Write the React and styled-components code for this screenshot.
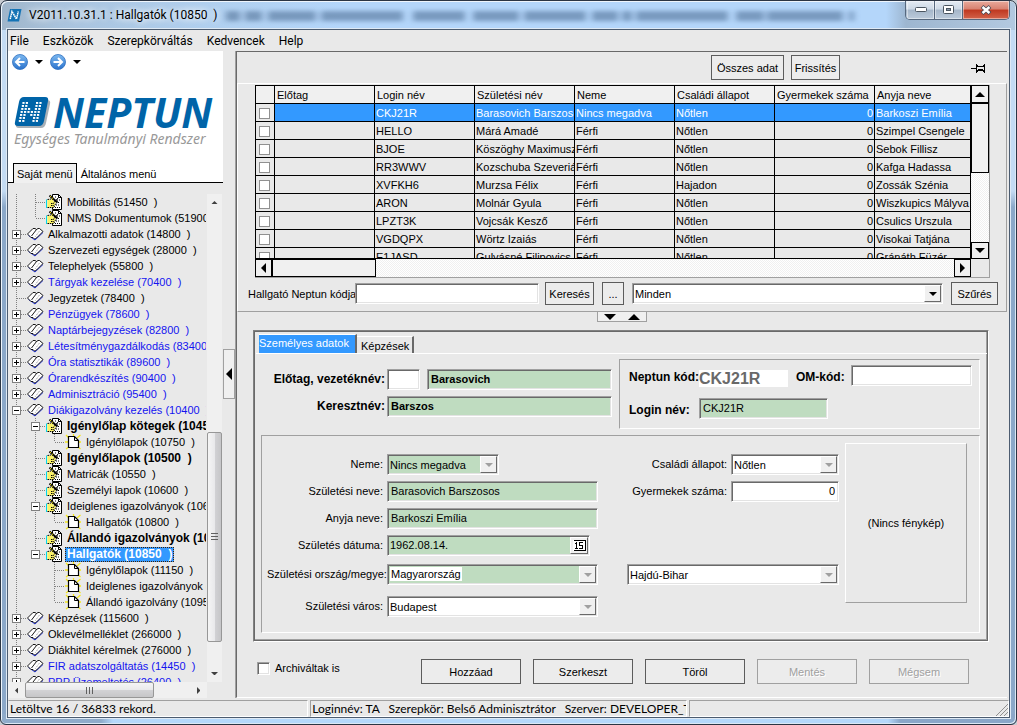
import React, { useState } from 'react';
import styled, { createGlobalStyle, css } from 'styled-components';

const GlobalStyle = createGlobalStyle`
  * { box-sizing: border-box; }
  body {
    margin: 0;
    background: #c8ccd2;
    color: #000;
    font: 11px/14px "Liberation Sans", Arial, sans-serif;
  }
  button, input, select, output { font: inherit; color: inherit; }
`;

const sunken = css`
  border: 1px solid;
  border-color: #a0a0a0 #fff #fff #a0a0a0;
  box-shadow: inset 1px 1px 0 #696969, inset -1px -1px 0 #e3e3e3;
`;

const etched = css`
  border: 1px solid;
  border-color: #a0a0a0 #fff #fff #a0a0a0;
`;

/* window */

const Window = styled.div`
  display: flex;
  flex-direction: column;
  height: 100vh;
  padding: 0 6px 6px;
  border: 1px solid #2b3544;
  border-radius: 7px 7px 6px 6px;
  background:
    linear-gradient(90deg, #8fabca 100px, #b5d8fb 112px, #b5d8fb calc(100% - 128px), #8aa6c8 calc(100% - 116px)) bottom / 100% 10px no-repeat,
    linear-gradient(90deg, #9fb5ca 0, #a9c3dd 60px, #b0cfee 200px, #b4d6fa 340px, #b4d6fa calc(100% - 130px), #9db6d0 calc(100% - 110px), #b3c9e0) top / 100% 29px no-repeat,
    linear-gradient(#c4dbf3 190px, #8ba8c9 206px);
  box-shadow: inset 1px 1px 0 #eef5fc, inset -1px -1px 0 #dbe8f5;
`;

const TitleBar = styled.header`
  position: relative;
  display: flex;
  flex: none;
  height: 28px;
  align-items: center;
`;

const Title = styled.h1`
  margin: 0 0 0 7px;
  font: 12px/16px Roboto, sans-serif;
  white-space: pre;
  text-shadow: 0 0 6px #fff, 0 0 8px #fff;
`;

const GlassBlur = styled.svg`
  flex: 1;
  min-width: 0;
  height: 28px;
`;

const Caption = styled.div`
  display: flex;
  align-self: flex-start;
  border: 1px solid #56687e;
  border-top: 0;
  border-radius: 0 0 5px 5px;
  overflow: hidden;
`;

const CaptionButton = styled.button`
  display: flex;
  justify-content: center;
  align-items: center;
  width: ${p => (p.$close ? 47 : 28)}px;
  height: 18px;
  padding: 0;
  border: 0;
  border-left: 1px solid ${p => (p.$first ? 'transparent' : '#56687e')};
  background: ${p => (p.$close
    ? 'linear-gradient(#e9aa9c 0, #d88170 45%, #bf3820 50%, #d3634a 100%)'
    : 'linear-gradient(#e4ebf3 0, #cdd9e6 45%, #a5b6c9 50%, #bccbdb 100%)')};
  box-shadow: inset 0 0 0 1px rgba(255, 255, 255, 0.45);
`;

const Client = styled.div`
  display: flex;
  flex-direction: column;
  flex: 1;
  min-height: 0;
  border: 1px solid #4c5c70;
  background: #e9e9e9;
  box-shadow: 0 0 0 1px #dfeaf5;
`;

const MenuBar = styled.nav`
  display: flex;
  flex: none;
  height: 21px;
  padding-left: 2px;
  gap: 14px;
`;

const MenuItem = styled.button`
  padding: 0;
  border: 0;
  background: none;
  font: 12px/20px Roboto, sans-serif;
`;

const Body = styled.div`
  display: flex;
  flex: 1;
  min-height: 0;
`;

/* left side */

const Sidebar = styled.aside`
  display: flex;
  flex-direction: column;
  flex: none;
  width: 215px;
`;

const Brand = styled.div`
  flex: none;
  height: 112px;
  background: #fff;
`;

const History = styled.div`
  display: flex;
  align-items: center;
  gap: 7px;
  height: 22px;
  padding-left: 4px;
`;

const IconButton = styled.button`
  display: flex;
  padding: 0;
  border: 0;
  background: none;
`;

const Logo = styled.div`
  display: flex;
  align-items: center;
  height: 30px;
  margin-top: 24px;
  padding-left: 6px;
  gap: 2px;
`;

const LogoName = styled.span`
  color: #0064a8;
  font: italic bold 41px/30px "Open Sans", sans-serif;
`;

const Tagline = styled.p`
  margin: 3px 0 0 6px;
  color: #999;
  font: italic 14px/18px "Noto Sans", sans-serif;
  white-space: nowrap;
`;

const MenuTabs = styled.div`
  display: flex;
  flex: none;
  height: 20px;
  padding-left: 5px;
  background: linear-gradient(#000, #000) bottom / 100% 1px no-repeat #fff;
`;

const MenuTab = styled.button`
  padding: 0 3px;
  border: 1px solid #000;
  border-bottom: 0;
  background: #f0f0f0;
  white-space: nowrap;
  ${p => !p.$active && 'border-color: transparent; background: none;'}
`;

const TreeArea = styled.div`
  display: grid;
  flex: 1;
  min-height: 0;
  margin-top: 11px;
  grid-template-columns: 1fr 15px;
  grid-template-rows: minmax(0, 1fr) 16px;
  padding-right: 1px;
`;

const Tree = styled.ul`
  margin: 0 1px 0 0;
  padding: 0;
  list-style: none;
  overflow: hidden;
`;

const TreeRow = styled.li`
  display: flex;
  align-items: center;
  height: 16px;
  svg { flex: none; }
`;

const TreeLabel = styled.a`
  margin-left: 2px;
  padding: 0 2px;
  line-height: 15px;
  color: ${p => (p.$blue ? '#1414f0' : '#000')};
  font-size: ${p => (p.$bold ? 12 : 11)}px;
  font-weight: ${p => (p.$bold ? 'bold' : 'normal')};
  text-decoration: none;
  white-space: pre;
  ${p => p.$selected && css`
    background: #3399ff;
    color: #fff;
    outline: 1px dotted #402000;
    outline-offset: -1px;
  `}
`;

const Scroll = styled.div`
  display: flex;
  flex-direction: ${p => (p.$vertical ? 'column' : 'row')};
  align-items: stretch;
  background: #f0f0f0;
`;

const ScrollEnd = styled.span`
  display: flex;
  flex: 0 0 17px;
  justify-content: center;
  align-items: center;
`;

const ScrollSpace = styled.span`
  flex: ${p => p.$grow} 0 0;
`;

const ScrollThumb = styled.span`
  display: flex;
  flex: ${p => p.$grow} 0 0;
  justify-content: center;
  align-items: center;
  border: 1px solid #979797;
  border-radius: 2px;
  background: linear-gradient(${p => (p.$vertical ? '90deg' : '180deg')}, #f5f5f5, #e9e9eb 50%, #d2d2d5 52%, #c6c6c8);
`;

const Splitter = styled.div`
  flex: none;
  width: 13px;
  padding-top: 298px;
  background: linear-gradient(#a0a0a0, #a0a0a0) right / 1px 100% no-repeat;
`;

const SplitterButton = styled.button`
  display: flex;
  justify-content: center;
  align-items: center;
  width: 12px;
  height: 50px;
  padding: 0;
  border: 1px solid #a0a0a0;
  background: #f0f0f0;
`;

/* right side */

const Main = styled.main`
  display: flex;
  flex-direction: column;
  flex: 1;
  min-width: 0;
  margin-right: 2px;
  border-top: 1px solid #696969;
  border-left: 1px solid #696969;
  border-bottom: 1px solid #fff;
`;

const Toolbar = styled.div`
  display: flex;
  flex: none;
  justify-content: flex-end;
  align-items: flex-end;
  height: 31px;
  padding: 0 21px 3px 0;
  gap: 7px;
`;

const Button = styled.button`
  flex: none;
  width: ${p => p.$width}px;
  height: ${p => p.$height || 25}px;
  padding: 0;
  border: 1px solid #5c5c5c;
  background: #ececec;
  &:disabled {
    border-color: #a0a0a0;
    color: #a0a0a0;
    text-shadow: 1px 1px 0 #fff;
  }
`;

const PinButton = styled(IconButton)`
  margin: 0 0 6px 124px;
`;

const ListPanel = styled.section`
  padding: 1px 0 6px;
  border: 1px solid;
  border-color: #fff #a0a0a0 #a0a0a0 #fff;
`;

const GridFrame = styled.div`
  display: grid;
  grid-template-columns: minmax(0, 1fr) 18px;
  grid-template-rows: 174px 18px;
  margin: 0 16px 0 17px;
  border-right: 1px solid #a0a0a0;
  border-bottom: 1px solid #a0a0a0;
`;

const GridView = styled.div`
  overflow: hidden;
  border: 1px solid #000;
  border-right: 0;
`;

const Table = styled.table`
  width: 100%;
  table-layout: fixed;
  border-collapse: separate;
  border-spacing: 0;
`;

const HeadCell = styled.th`
  width: ${p => p.$width || 'auto'};
  height: 18px;
  padding: 0 0 0 2px;
  border: solid #000;
  border-width: 0 1px 1px 0;
  background: #f0f0f0;
  font-weight: normal;
  text-align: left;
  white-space: nowrap;
  overflow: hidden;
`;

const Cell = styled.td`
  height: 18px;
  padding: 0 1px;
  border: solid #000;
  border-width: 0 1px 1px 0;
  background: ${p => (p.$selected ? '#3399ff' : '#e9e9e9')};
  color: ${p => (p.$selected ? '#fff' : '#000')};
  text-align: ${p => p.$align || 'left'};
  white-space: nowrap;
  overflow: hidden;
`;

const RowCheck = styled.input`
  display: block;
  appearance: none;
  width: 11px;
  height: 11px;
  margin: 1px 0 0 2px;
  border: 1px solid #909090;
  background: #fff;
`;

const dither = 'repeating-conic-gradient(#fff 0 25%, #f0f0f0 0 50%) 0 0 / 2px 2px';

const FlatScroll = styled.div`
  display: flex;
  flex-direction: ${p => (p.$vertical ? 'column' : 'row')};
  background: ${dither};
`;

const FlatPart = styled.span`
  display: flex;
  flex: 0 0 ${p => p.$size}px;
  justify-content: center;
  align-items: center;
  border: 1px solid #000;
  background: #f0f0f0;
`;

const Grow = styled.span`
  flex: 1;
`;

const SearchRow = styled.form`
  display: flex;
  align-items: center;
  height: 23px;
  margin-top: 4px;
  padding: 0 8px 0 10px;
`;

const SearchLabel = styled.label`
  flex: none;
  width: 107px;
  white-space: nowrap;
`;

const SearchGroup = styled.div`
  display: flex;
  flex: 1;
  min-width: 0;
  align-items: center;
  padding-left: 6px;
  gap: 8px;
`;

const Input = styled.input`
  width: ${p => (p.$width ? `${p.$width}px` : '100%')};
  height: 21px;
  min-width: 0;
  padding: 0 3px 1px;
  ${sunken}
  border-radius: 0;
  background: ${p => (p.$required ? '#bfdcc0' : '#fff')};
  font-weight: ${p => (p.$bold ? 'bold' : 'normal')};
  text-align: ${p => p.$align || 'left'};
  outline: 0;
`;

const SelectBox = styled.span`
  position: relative;
  display: flex;
  flex: ${p => (p.$fill ? 1 : 'none')};
  width: ${p => (p.$width ? `${p.$width}px` : 'auto')};
  grid-column: ${p => p.$column || 'auto'};
  height: 21px;
  ${sunken}
  background: ${p => (p.$required ? '#bfdcc0' : '#fff')};
`;

const SelectField = styled.select`
  appearance: none;
  flex: 1;
  min-width: 0;
  padding: 0 18px 0 2px;
  border: 0;
  border-radius: 0;
  background: none;
  outline: 0;
`;

const SelectArrow = styled.span`
  position: absolute;
  top: 1px;
  right: 1px;
  bottom: 1px;
  display: flex;
  justify-content: center;
  align-items: center;
  width: 17px;
  border: 1px solid;
  border-color: #fff #696969 #696969 #fff;
  background: #f0f0f0;
  color: ${p => (p.$dim ? '#a0a0a0' : '#000')};
  pointer-events: none;
`;

const SelectedText = styled.span`
  position: absolute;
  top: 2px;
  left: 2px;
  padding: 0 1px;
  background: #fff;
  pointer-events: none;
`;

const FoldHandle = styled.div`
  display: flex;
  align-self: center;
  justify-content: space-around;
  align-items: center;
  width: 50px;
  height: 10px;
  border: 1px solid #a0a0a0;
  border-top: 0;
  background: #f0f0f0;
`;

const Detail = styled.section`
  margin: 8px 18px 0 16px;
  padding: 3px 1px 1px 2px;
  border: 1px solid;
  border-color: #808080 #fff #fff #808080;
  box-shadow: inset 1px 1px 0 #696969, inset -1px -1px 0 #696969, inset -2px -2px 0 #a0a0a0;
`;

const DetailTabs = styled.div`
  display: flex;
  align-items: flex-end;
  height: 19px;
  padding-left: 3px;
`;

const DetailTab = styled.button`
  width: ${p => p.$width}px;
  height: ${p => (p.$active ? 19 : 17)}px;
  padding: ${p => (p.$active ? '0 0 3px' : '2px 0 0 4px')};
  border: solid #696969;
  border-width: 0 2px 0 0;
  border-top: 1px solid #fff;
  background: ${p => (p.$active ? '#3399ff' : '#e9e9e9')};
  color: ${p => (p.$active ? '#fff' : '#000')};
  line-height: 14px;
  text-align: left;
`;

const Page = styled.div`
  padding: 5px 7px 7px 5px;
  border-top: 1px solid #fff;
`;

const NameArea = styled.div`
  display: flex;
  gap: 7px;
`;

const NameFields = styled.div`
  display: grid;
  flex: 351 0 0;
  grid-template-columns: 126px 33px minmax(0, 1fr);
  grid-template-rows: 21px 21px;
  align-content: start;
  gap: 6px 0;
  padding-top: 10px;
`;

const WideCell = styled.div`
  grid-column: ${p => (p.$from || 2)} / -1;
  padding-left: ${p => (p.$from ? 7 : 0)}px;
`;

const FieldLabel = styled.label`
  padding: 3px 4px 0 0;
  font-size: ${p => (p.$bold ? 12 : 11)}px;
  font-weight: ${p => (p.$bold ? 'bold' : 'normal')};
  text-align: ${p => p.$align || 'right'};
  white-space: nowrap;
`;

const NameLabel = styled(FieldLabel)`
  padding-right: 2px;
`;

const CodeBox = styled.div`
  display: grid;
  flex: 343 0 0;
  min-width: 0;
  height: 70px;
  grid-template-columns: 70px 89px 63px minmax(0, 1fr);
  grid-template-rows: 33px 21px;
  padding: 5px 7px 0 9px;
  ${etched}
`;

const CodeLabel = styled(FieldLabel)`
  padding: 5px 0 0 ${p => (p.$indent || 0)}px;
  text-align: left;
`;

const Code = styled.output`
  height: 17px;
  margin-top: 5px;
  background: #fff;
  color: #696969;
  font-size: 16px;
  font-weight: bold;
  line-height: 18px;
`;

const Personal = styled.div`
  display: flex;
  margin-top: 6px;
  padding: 7px 12px 15px 5px;
  gap: 6px;
  ${etched}
`;

const PersonalFields = styled.div`
  display: grid;
  flex: 1;
  grid-template-columns: 120px minmax(0, 211fr) 29px 104px minmax(0, 108fr);
  grid-template-rows: 27px 27px 27px 29px 32px 21px;
  align-items: start;
  padding-top: 11px;
`;

const DateBox = styled.span`
  display: flex;
  width: 203px;
  height: 21px;
  ${sunken}
  background: #bfdcc0;
`;

const DateInput = styled.input`
  flex: 1;
  min-width: 0;
  padding: 0 2px 2px;
  border: 0;
  background: none;
  outline: 0;
`;

const DateButton = styled.button`
  display: flex;
  justify-content: center;
  align-items: center;
  width: 18px;
  margin: 1px;
  padding: 0;
  border: 1px solid;
  border-color: #fff #696969 #696969 #fff;
  background: #f0f0f0;
`;

const Photo = styled.div`
  display: flex;
  flex: none;
  justify-content: center;
  align-items: center;
  width: 122px;
  height: 160px;
  border: 1px solid;
  border-color: #fff #a0a0a0 #a0a0a0 #fff;
`;

const Actions = styled.footer`
  display: flex;
  justify-content: space-between;
  margin: 17px 38px 0 20px;
`;

const Archive = styled.label`
  display: flex;
  align-items: flex-start;
  padding-top: 2px;
  gap: 5px;
`;

const ArchiveCheck = styled.input`
  appearance: none;
  width: 13px;
  height: 13px;
  margin: 1px 0 0;
  ${sunken}
  background: #fff;
`;

const ActionButtons = styled.div`
  display: flex;
  gap: 12px;
`;

const StatusBar = styled.footer`
  display: grid;
  flex: none;
  grid-template-columns: minmax(0, 300fr) minmax(0, 376fr) minmax(0, 320fr);
  gap: 2px;
  height: 19px;
  padding-top: 2px;
`;

const StatusPane = styled.div`
  position: relative;
  padding-left: 1px;
  ${etched}
  border-left-color: ${p => (p.$first ? 'transparent' : '#a0a0a0')};
  font: 12px/16px Lato, sans-serif;
  white-space: pre;
  overflow: hidden;
`;

const Grip = styled.svg`
  position: absolute;
  right: 0;
  bottom: 0;
`;

/* icons */

const triangles = {
  up: 'M0 5 L5 0 L10 5Z',
  down: 'M0 0 L10 0 L5 5Z',
  left: 'M5 0 L5 10 L0 5Z',
  right: 'M0 0 L5 5 L0 10Z',
};

function Triangle({ dir, size = 10, color = '#000' }) {
  const flat = dir === 'up' || dir === 'down';
  return (
    <svg
      width={flat ? size : size / 2}
      height={flat ? size / 2 : size}
      viewBox={flat ? '0 0 10 5' : '0 0 5 10'}
      aria-hidden="true"
    >
      <path d={triangles[dir]} fill={color} />
    </svg>
  );
}

function RoundArrow({ back }) {
  const id = back ? 'ballBack' : 'ballNext';
  return (
    <svg width="16" height="16" viewBox="0 0 16 16" aria-hidden="true">
      <defs>
        <linearGradient id={id} x1="0" y1="0" x2="0" y2="1">
          <stop offset="0" stopColor="#7db9f0" />
          <stop offset="1" stopColor="#2a72cc" />
        </linearGradient>
      </defs>
      <circle cx="8" cy="8" r="7.5" fill={`url(#${id})`} stroke="#2d6fbf" strokeWidth="0.8" />
      <path
        d="M12.5 8 H4.5 M8 4 L4 8 L8 12"
        transform={back ? undefined : 'rotate(180 8 8)'}
        fill="none"
        stroke="#fff"
        strokeWidth="2"
      />
    </svg>
  );
}

function LogoMark({ size = 37 }) {
  const dots = [
    [1, 2, 5, 6], [1, 2, 5, 6], [1, 2, 3, 5, 6], [1, 2, 3, 4, 5, 6],
    [1, 2, 4, 5, 6], [1, 2, 5, 6], [1, 2, 5, 6],
  ];
  return (
    <svg width={size} height={Math.round(size * 0.84)} viewBox="0 0 37 31" aria-hidden="true">
      <path d="M11 3 H33 Q37 3 36 7 L32 26 Q31 31 27 31 H5 Q1 31 2 27Z" fill="#a9b0b6" />
      <path d="M10 0 H31 Q35 0 34 4 L30 24 Q29 29 25 29 H4 Q0 29 1 25 L5 5 Q6 0 10 0Z" fill="#0064a8" />
      {dots.map((row, y) => row.map(x => (
        <rect key={`${x}-${y}`} x={5 + x * 3.4 - y * 0.6} y={5 + y * 3} width="2.2" height="1.9" fill="#fff" />
      )))}
    </svg>
  );
}

function TitleMark() {
  return (
    <svg width="15" height="14" viewBox="0 0 15 14" aria-hidden="true">
      <path d="M3 1 H14.5 L12 13.5 H0.5Z" fill="#1473b5" />
      <path d="M3.2 11 L5 3.5 L9.5 11 L11.3 3.5" fill="none" stroke="#fff" strokeWidth="1.5" strokeDasharray="1.6 0.5" />
    </svg>
  );
}

function PinIcon() {
  return (
    <svg width="15" height="11" viewBox="0 0 15 11" shapeRendering="crispEdges" aria-hidden="true">
      <path d="M0 5.5 H5 M5.5 1 V10 M6.5 2 V4 M6.5 7 V9 M7 3.5 H12 M7 7.5 H12 M7 6.5 H12 M12.5 2 V4 M12.5 7 V9 M13.5 1 V10" fill="none" stroke="#000" />
    </svg>
  );
}

function BookIcon() {
  return (
    <svg width="17" height="14" viewBox="0 0 17 14" aria-hidden="true">
      <path d="M1.5 8.5 L8 13 L16 5.5" fill="none" stroke="#2030d8" />
      <path d="M0.5 7 L6 1.5 L8 1.5 L9.5 2.5 L11 1.5 L12.5 1.5 L16 4.5 L9.5 11 L8.5 11.5 L7.5 12 L6 10.5 L4 10.5Z" fill="#fff" stroke="#000" strokeWidth="0.9" />
      <path d="M9.5 2.5 L4.5 9" fill="none" stroke="#000" strokeWidth="0.9" />
      <path d="M12.5 4 L8 10" fill="none" stroke="#808080" strokeDasharray="1 1" strokeWidth="0.8" />
    </svg>
  );
}

function EditIcon() {
  return (
    <svg width="17" height="16" viewBox="0 0 17 16" aria-hidden="true">
      <path d="M6.5 0.5 H12.5 L15.5 3.5 V15.5 H6.5Z" fill="#fff" stroke="#000" />
      <path d="M12.5 0.5 V3.5 H15.5" fill="none" stroke="#000" />
      <path d="M11 6 H14 M12 8.5 H14 M10 11 H14 M9 13.5 H14 M9 3 H11" stroke="#000" strokeDasharray="1 1" />
      <path d="M0.5 5.5 V14" stroke="#00d8e8" />
      <path d="M1.5 6 L6 5 L8 7.5 L10 8 L9 10 L8 13.5 H1.5Z" fill="#fbf267" />
      <path d="M1.5 5.5 L5 5 M1.5 13.5 H8 L9 10.5 L11 9.5 M5 9.5 H8 M5 11.5 H8" fill="none" stroke="#000" strokeDasharray="1.5 0.8" />
      <path d="M3.5 1.5 L11.5 8.5" stroke="#000" strokeWidth="2" />
      <path d="M4 2 L8 5.5" stroke="#e9d800" strokeDasharray="1.5 1" />
      <path d="M12.5 3.5 L8 8.5" stroke="#000" />
    </svg>
  );
}

function NewPageIcon() {
  return (
    <svg width="17" height="16" viewBox="0 0 17 16" aria-hidden="true">
      <path d="M1 1 L5 5 M15.5 1 L12 4 M1 15 L5 12 M15.5 15 L12 12 M0 8 H3 M13 8 H16 M8.5 0 V2" stroke="#f4e61c" strokeWidth="1.3" />
      <path d="M3.5 2.5 H9.5 L13.5 6.5 V13.5 H3.5Z" fill="#fff" stroke="#000" strokeWidth="1.2" />
      <path d="M9.5 2.5 V6.5 H13.5" fill="none" stroke="#000" />
    </svg>
  );
}

const icons = { book: BookIcon, edit: EditIcon, page: NewPageIcon };

// one 19px wide tree column: | line, t tee, l corner, + and - expanders, e last expander
function Guide({ kind }) {
  const box = kind === '+' || kind === '-';
  return (
    <svg width="19" height="16" viewBox="0 0 19 16" shapeRendering="crispEdges" aria-hidden="true">
      {kind !== ' ' && (
        <path
          d={kind === 'l' || kind === 'e' ? 'M8.5 0 V8' : 'M8.5 0 V16'}
          stroke="#808080"
          strokeDasharray="1 1"
        />
      )}
      {kind !== ' ' && kind !== '|' && <path d="M9 8.5 H19" stroke="#808080" strokeDasharray="1 1" />}
      {(box || kind === 'e') && (
        <>
          <rect x="4.5" y="4.5" width="8" height="8" fill="#fff" stroke="#808080" />
          <path d={kind === '+' ? 'M6 8.5 H11 M8.5 6 V11' : 'M6 8.5 H11'} stroke="#000" />
        </>
      )}
    </svg>
  );
}

/* data */

const treeItems = [
  { guides: '|t', icon: 'edit', text: 'Mobilitás (51450  )' },
  { guides: '|l', icon: 'edit', text: 'NMS Dokumentumok (51900  )' },
  { guides: '+', icon: 'book', text: 'Alkalmazotti adatok (14800  )' },
  { guides: '+', icon: 'book', text: 'Szervezeti egységek (28000  )' },
  { guides: '+', icon: 'book', text: 'Telephelyek (55800  )' },
  { guides: '+', icon: 'book', text: 'Tárgyak kezelése (70400  )', blue: true },
  { guides: 't', icon: 'book', text: 'Jegyzetek (78400  )' },
  { guides: '+', icon: 'book', text: 'Pénzügyek (78600  )', blue: true },
  { guides: '+', icon: 'book', text: 'Naptárbejegyzések (82800  )', blue: true },
  { guides: '+', icon: 'book', text: 'Létesítménygazdálkodás (83400  )', blue: true },
  { guides: '+', icon: 'book', text: 'Óra statisztikák (89600  )', blue: true },
  { guides: '+', icon: 'book', text: 'Órarendkészítés (90400  )', blue: true },
  { guides: '+', icon: 'book', text: 'Adminisztráció (95400  )', blue: true },
  { guides: '-', icon: 'book', text: 'Diákigazolvány kezelés (10400  )', blue: true },
  { guides: '|-', icon: 'edit', text: 'Igénylőlap kötegek (10450  )', bold: true },
  { guides: '||l', icon: 'page', text: 'Igénylőlapok (10750  )' },
  { guides: '|t', icon: 'edit', text: 'Igénylőlapok (10500  )', bold: true },
  { guides: '|t', icon: 'edit', text: 'Matricák (10550  )' },
  { guides: '|t', icon: 'edit', text: 'Személyi lapok (10600  )' },
  { guides: '|-', icon: 'edit', text: 'Ideiglenes igazolványok (10650  )' },
  { guides: '||l', icon: 'page', text: 'Hallgatók (10800  )' },
  { guides: '|t', icon: 'edit', text: 'Állandó igazolványok (10700  )', bold: true },
  { guides: '|e', icon: 'edit', text: 'Hallgatók (10850  )', bold: true, selected: true },
  { guides: '| t', icon: 'page', text: 'Igénylőlapok (11150  )' },
  { guides: '| t', icon: 'page', text: 'Ideiglenes igazolványok (10900  )' },
  { guides: '| l', icon: 'page', text: 'Állandó igazolvány (10950  )' },
  { guides: '+', icon: 'book', text: 'Képzések (115600  )' },
  { guides: '+', icon: 'book', text: 'Oklevélmelléklet (266000  )' },
  { guides: '+', icon: 'book', text: 'Diákhitel kérelmek (276000  )' },
  { guides: '+', icon: 'book', text: 'FIR adatszolgáltatás (14450  )', blue: true },
  { guides: '+', icon: 'book', text: 'PPP Üzemeltetés (26400  )', blue: true },
];

const columns = ['Előtag', 'Login név', 'Születési név', 'Neme', 'Családi állapot', 'Gyermekek száma', 'Anyja neve'];

const students = [
  ['', 'CKJ21R', 'Barasovich Barszosos', 'Nincs megadva', 'Nőtlen', 0, 'Barkoszi Emília'],
  ['', 'HELLO', 'Márá Amadé', 'Férfi', 'Nőtlen', 0, 'Szimpel Csengele'],
  ['', 'BJOE', 'Köszöghy Maximusz', 'Férfi', 'Nőtlen', 0, 'Sebok Fillisz'],
  ['', 'RR3WWV', 'Kozschuba Szeverián', 'Férfi', 'Nőtlen', 0, 'Kafga Hadassa'],
  ['', 'XVFKH6', 'Murzsa Félix', 'Férfi', 'Hajadon', 0, 'Zossák Szénia'],
  ['', 'ARON', 'Molnár Gyula', 'Férfi', 'Nőtlen', 0, 'Wiszkupics Mályva'],
  ['', 'LPZT3K', 'Vojcsák Kesző', 'Férfi', 'Nőtlen', 0, 'Csulics Urszula'],
  ['', 'VGDQPX', 'Wörtz Izaiás', 'Férfi', 'Nőtlen', 0, 'Visokai Tatjána'],
  ['', 'E1JASD', 'Gulyásné Filipovics J', 'Férfi', 'Nőtlen', 0, 'Gránáth Füzér'],
];

/* parts */

function Select({ id, value, label, marked, dim = true, ...box }) {
  return (
    <SelectBox {...box}>
      <SelectField id={id} aria-label={label} defaultValue={value}>
        <option>{value}</option>
      </SelectField>
      {marked && <SelectedText aria-hidden="true">{value}</SelectedText>}
      <SelectArrow $dim={dim}>
        <Triangle dir="down" size={8} color="currentColor" />
      </SelectArrow>
    </SelectBox>
  );
}

function TreeMenu() {
  return (
    <TreeArea>
      <Tree>
        {treeItems.map(item => {
          const Icon = icons[item.icon];
          return (
            <TreeRow key={item.text}>
              {item.guides.split('').map((kind, i) => <Guide key={i} kind={kind} />)}
              <Icon />
              <TreeLabel href="#" $blue={item.blue} $bold={item.bold} $selected={item.selected}>
                {item.text}
              </TreeLabel>
            </TreeRow>
          );
        })}
      </Tree>
      <Scroll $vertical>
        <ScrollEnd><Triangle dir="up" size={7} color="#404040" /></ScrollEnd>
        <ScrollSpace $grow={221} />
        <ScrollThumb $vertical $grow={209}>
          <svg width="7" height="8" aria-hidden="true">
            <path d="M0 0.5 H7 M0 3.5 H7 M0 6.5 H7" stroke="#606060" />
          </svg>
        </ScrollThumb>
        <ScrollSpace $grow={23} />
        <ScrollEnd><Triangle dir="down" size={7} color="#404040" /></ScrollEnd>
      </Scroll>
      <Scroll>
        <ScrollEnd><Triangle dir="left" size={7} color="#404040" /></ScrollEnd>
        <ScrollThumb $grow={128}>
          <svg width="8" height="7" aria-hidden="true">
            <path d="M0.5 0 V7 M3.5 0 V7 M6.5 0 V7" stroke="#606060" />
          </svg>
        </ScrollThumb>
        <ScrollSpace $grow={36} />
        <ScrollEnd><Triangle dir="right" size={7} color="#404040" /></ScrollEnd>
      </Scroll>
    </TreeArea>
  );
}

function StudentGrid() {
  return (
    <GridFrame>
      <GridView>
        <Table>
          <thead>
            <tr>
              <HeadCell $width="19px" aria-label="Kijelölés" />
              {columns.map((name, i) => (
                <HeadCell key={name} $width={i < 6 ? '100px' : undefined}>{name}</HeadCell>
              ))}
            </tr>
          </thead>
          <tbody>
            {students.map((row, i) => (
              <tr key={row[1]}>
                <Cell><RowCheck type="checkbox" aria-label={row[1]} /></Cell>
                {row.map((value, n) => (
                  <Cell key={columns[n]} $selected={i === 0} $align={n === 5 ? 'right' : undefined}>{value}</Cell>
                ))}
              </tr>
            ))}
          </tbody>
        </Table>
      </GridView>
      <FlatScroll $vertical>
        <FlatPart $size={18}><Triangle dir="up" /></FlatPart>
        <FlatPart $size={70} />
        <Grow />
        <FlatPart $size={17}><Triangle dir="down" /></FlatPart>
      </FlatScroll>
      <FlatScroll>
        <FlatPart $size={17}><Triangle dir="left" /></FlatPart>
        <FlatPart $size={104} />
        <Grow />
        <FlatPart $size={17}><Triangle dir="right" /></FlatPart>
      </FlatScroll>
    </GridFrame>
  );
}

function PersonalPage() {
  return (
    <Page>
      <NameArea>
        <NameFields>
          <NameLabel htmlFor="lastName" $bold>Előtag, vezetéknév:</NameLabel>
          <Input aria-label="Előtag" />
          <WideCell $from={3}>
            <Input id="lastName" defaultValue="Barasovich" $required $bold />
          </WideCell>
          <NameLabel htmlFor="firstName" $bold>Keresztnév:</NameLabel>
          <WideCell>
            <Input id="firstName" defaultValue="Barszos" $required $bold />
          </WideCell>
        </NameFields>
        <CodeBox>
          <CodeLabel htmlFor="code" $bold>Neptun kód:</CodeLabel>
          <Code id="code">CKJ21R</Code>
          <CodeLabel htmlFor="omCode" $bold $indent={8}>OM-kód:</CodeLabel>
          <Input id="omCode" />
          <CodeLabel htmlFor="login" $bold>Login név:</CodeLabel>
          <Input id="login" defaultValue="CKJ21R" $required $width={129} />
        </CodeBox>
      </NameArea>
      <Personal>
        <PersonalFields>
          <FieldLabel htmlFor="sex">Neme:</FieldLabel>
          <Select id="sex" value="Nincs megadva" $required $width={112} />
          <span />
          <FieldLabel htmlFor="family">Családi állapot:</FieldLabel>
          <Select id="family" value="Nőtlen" />

          <FieldLabel htmlFor="birthName">Születési neve:</FieldLabel>
          <Input id="birthName" defaultValue="Barasovich Barszosos" $required />
          <span />
          <FieldLabel htmlFor="children">Gyermekek száma:</FieldLabel>
          <Input id="children" defaultValue="0" $align="right" />

          <FieldLabel htmlFor="mother">Anyja neve:</FieldLabel>
          <Input id="mother" defaultValue="Barkoszi Emília" $required />
          <span />
          <span />
          <span />

          <FieldLabel htmlFor="birthDate">Születés dátuma:</FieldLabel>
          <DateBox>
            <DateInput id="birthDate" defaultValue="1962.08.14." />
            <DateButton type="button" aria-label="Naptár">
              <svg width="13" height="11" viewBox="0 0 13 11" shapeRendering="crispEdges" aria-hidden="true">
                <rect x="0" y="0" width="13" height="11" fill="#fff" />
                <path d="M1 0.5 H12 M12.5 0 V11 M1 10.5 H13" stroke="#000" />
                <path d="M3.5 2 V8 M2 3.5 H4 M2 8.5 H5 M10 2.5 H6.5 V5.5 H9.5 V8.5 H6" fill="none" stroke="#000" />
              </svg>
            </DateButton>
          </DateBox>
          <span />
          <span />
          <span />

          <FieldLabel htmlFor="country">Születési ország/megye:</FieldLabel>
          <Select id="country" value="Magyarország" $required marked />
          <span />
          <Select label="Megye" value="Hajdú-Bihar" $column="span 2" />

          <FieldLabel htmlFor="city">Születési város:</FieldLabel>
          <Select id="city" value="Budapest" />
        </PersonalFields>
        <Photo>(Nincs fénykép)</Photo>
      </Personal>
    </Page>
  );
}

function App() {
  const [menuTab, setMenuTab] = useState('own');

  return (
    <>
      <GlobalStyle />
      <Window>
        <TitleBar>
          <TitleMark />
          <Title>{'V2011.10.31.1 : Hallgatók (10850  )'}</Title>
          <GlassBlur aria-hidden="true">
            <defs>
              <filter id="glass" filterUnits="userSpaceOnUse" x="0" y="0" width="700" height="28">
                <feGaussianBlur stdDeviation="3 2" />
              </filter>
            </defs>
            <path
              d="M8 15 H636"
              stroke="#3f5f86"
              strokeWidth="10"
              strokeDasharray="14 5 17 6 48 5 82 10 52 8 46 5 62 6 26 4 10 4 92 8 28 3 76 6 24 3 12 20"
              opacity="0.5"
              filter="url(#glass)"
            />
          </GlassBlur>
          <Caption>
            <CaptionButton $first aria-label="Kis méret">
              <svg width="12" height="6" aria-hidden="true">
                <rect x="0.5" y="0.5" width="11" height="4" rx="1" fill="#fff" stroke="#4a5560" />
              </svg>
            </CaptionButton>
            <CaptionButton aria-label="Teljes méret">
              <svg width="11" height="10" aria-hidden="true">
                <rect x="0.5" y="0.5" width="10" height="8" rx="1" fill="#fff" stroke="#4a5560" />
                <rect x="3.5" y="3.5" width="4" height="2" fill="#8796a8" stroke="#4a5560" />
              </svg>
            </CaptionButton>
            <CaptionButton $close aria-label="Bezárás">
              <svg width="12" height="10" viewBox="0 0 12 10" aria-hidden="true">
                <path d="M2 1.5 L10 8.5 M10 1.5 L2 8.5" stroke="#4a4a55" strokeWidth="4" />
                <path d="M2.5 2 L9.5 8 M9.5 2 L2.5 8" stroke="#fff" strokeWidth="2.4" />
              </svg>
            </CaptionButton>
          </Caption>
        </TitleBar>

        <Client>
          <MenuBar>
            {['File', 'Eszközök', 'Szerepkörváltás', 'Kedvencek', 'Help'].map(name => (
              <MenuItem key={name}>{name}</MenuItem>
            ))}
          </MenuBar>

          <Body>
            <Sidebar>
              <Brand>
                <History>
                  <IconButton aria-label="Vissza"><RoundArrow back /></IconButton>
                  <Triangle dir="down" size={8} />
                  <IconButton aria-label="Előre"><RoundArrow /></IconButton>
                  <Triangle dir="down" size={8} />
                </History>
                <Logo>
                  <LogoMark />
                  <LogoName>NEPTUN</LogoName>
                </Logo>
                <Tagline>Egységes Tanulmányi Rendszer</Tagline>
              </Brand>
              <MenuTabs>
                <MenuTab $active={menuTab === 'own'} onClick={() => setMenuTab('own')}>Saját menü</MenuTab>
                <MenuTab $active={menuTab === 'all'} onClick={() => setMenuTab('all')}>Általános menü</MenuTab>
              </MenuTabs>
              <TreeMenu />
            </Sidebar>

            <Splitter>
              <SplitterButton aria-label="Menü elrejtése"><Triangle dir="left" size={12} /></SplitterButton>
            </Splitter>

            <Main>
              <Toolbar>
                <Button $width={73}>Összes adat</Button>
                <Button $width={49}>Frissítés</Button>
                <PinButton aria-label="Rögzítés"><PinIcon /></PinButton>
              </Toolbar>

              <ListPanel>
                <StudentGrid />
                <SearchRow onSubmit={event => event.preventDefault()}>
                  <SearchLabel htmlFor="search">Hallgató Neptun kódja</SearchLabel>
                  <Input id="search" $width={184} />
                  <SearchGroup>
                    <Button $width={49} $height={23}>Keresés</Button>
                    <Button $width={22} $height={23} type="button">...</Button>
                    <Select label="Szűrő" value="Minden" dim={false} $fill />
                    <Button $width={47} $height={23} type="button">Szűrés</Button>
                  </SearchGroup>
                </SearchRow>
              </ListPanel>

              <FoldHandle>
                <Triangle dir="down" size={12} />
                <Triangle dir="up" size={12} />
              </FoldHandle>

              <Detail>
                <DetailTabs>
                  <DetailTab $active $width={98}>Személyes adatok</DetailTab>
                  <DetailTab $width={57}>Képzések</DetailTab>
                </DetailTabs>
                <PersonalPage />
              </Detail>

              <Actions>
                <Archive>
                  <ArchiveCheck type="checkbox" />
                  Archiváltak is
                </Archive>
                <ActionButtons>
                  <Button $width={100}>Hozzáad</Button>
                  <Button $width={100}>Szerkeszt</Button>
                  <Button $width={100}>Töröl</Button>
                  <Button $width={100} disabled>Mentés</Button>
                  <Button $width={100} disabled>Mégsem</Button>
                </ActionButtons>
              </Actions>
            </Main>
          </Body>

          <StatusBar>
            <StatusPane $first>Letöltve 16 / 36833 rekord.</StatusPane>
            <StatusPane>{'Loginnév: TA   Szerepkör: Belső Adminisztrátor   Szerver: DEVELOPER_Teszt'}</StatusPane>
            <StatusPane>
              <Grip width="13" height="13" aria-hidden="true">
                <path d="M1 13 L13 1 M5 13 L13 5 M9 13 L13 9" stroke="#909090" />
              </Grip>
            </StatusPane>
          </StatusBar>
        </Client>
      </Window>
    </>
  );
}

export default App;
